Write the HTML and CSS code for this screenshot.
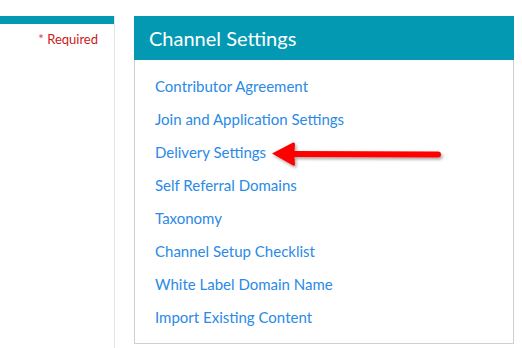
FILE: index.html
```html
<!DOCTYPE html>
<html lang="en">
<head>
  <meta charset="UTF-8" />
  <title>Channel Settings</title>
  <link rel="stylesheet" href="styles.css">
</head>
<body>
  <div class="page">
    <div class="side">
      <div class="side-bar"></div>
      <div class="required"><span class="star">*</span> Required</div>
    </div>

    <div class="panel">
      <div class="panel-head">Channel Settings</div>
      <ul class="panel-links">
        <li><a href="#">Contributor Agreement</a></li>
        <li><a href="#">Join and Application Settings</a></li>
        <li><a href="#">Delivery Settings</a></li>
        <li><a href="#">Self Referral Domains</a></li>
        <li><a href="#">Taxonomy</a></li>
        <li><a href="#">Channel Setup Checklist</a></li>
        <li><a href="#">White Label Domain Name</a></li>
        <li><a href="#">Import Existing Content</a></li>
      </ul>
    </div>
  </div>

  <!-- annotation arrow pointing at Delivery Settings -->
  <svg class="arrow" width="190" height="34" viewBox="0 0 190 34">
    <defs>
      <filter id="shadow" x="-10%" y="-40%" width="130%" height="200%">
        <feDropShadow dx="1.5" dy="2" stdDeviation="1.5" flood-color="#000" flood-opacity="0.35"/>
      </filter>
    </defs>
    <g filter="url(#shadow)" fill="#ff0000">
      <path d="M2 14.5 L23 3.5 Q25 3 25 5 L24.5 12 L168 12.5 Q171 12.5 171 15.5 Q171 18.5 168 18.5 L24.5 18 L25 25.5 Q25 27 23 26.5 Z"/>
    </g>
  </svg>
</body>
</html>
```

FILE: styles.css
```css
body {
  margin: 0;
  background: #fff;
  font-family: 'Lato', 'Open Sans', sans-serif;
}

.page {
  display: flex;
  align-items: flex-start;
  padding-top: 16px;
  min-height: 332px;
}

.side {
  width: 114px;
  align-self: stretch;
  border-right: 1px solid #e4e4e4;
}

.side-bar {
  height: 8px;
  background: #0399b3;
}

.required {
  text-align: right;
  padding-right: 16px;
  margin-top: 7px;
  font-size: 13px;
  color: #cc1a1a;
}

.star {
  color: #d2455a;
}

.panel {
  margin-left: 19px;
  width: 378px;
  border: 1px solid #cfcfcf;
  border-top: none;
}

.panel-head {
  background: #0399b3;
  color: #fff;
  height: 44px;
  line-height: 45px;
  padding-left: 15px;
  font-size: 20px;
  margin: 0 -1px;
}

.panel-links {
  list-style: none;
  margin: 0;
  padding: 10px 0 9px 20px;
  font-size: 15px;
}

.panel-links li {
  line-height: 33px;
}

.panel-links a {
  color: #2a8ae6;
  text-decoration: none;
}

.arrow {
  position: absolute;
  left: 270px;
  top: 139px;
}
```
